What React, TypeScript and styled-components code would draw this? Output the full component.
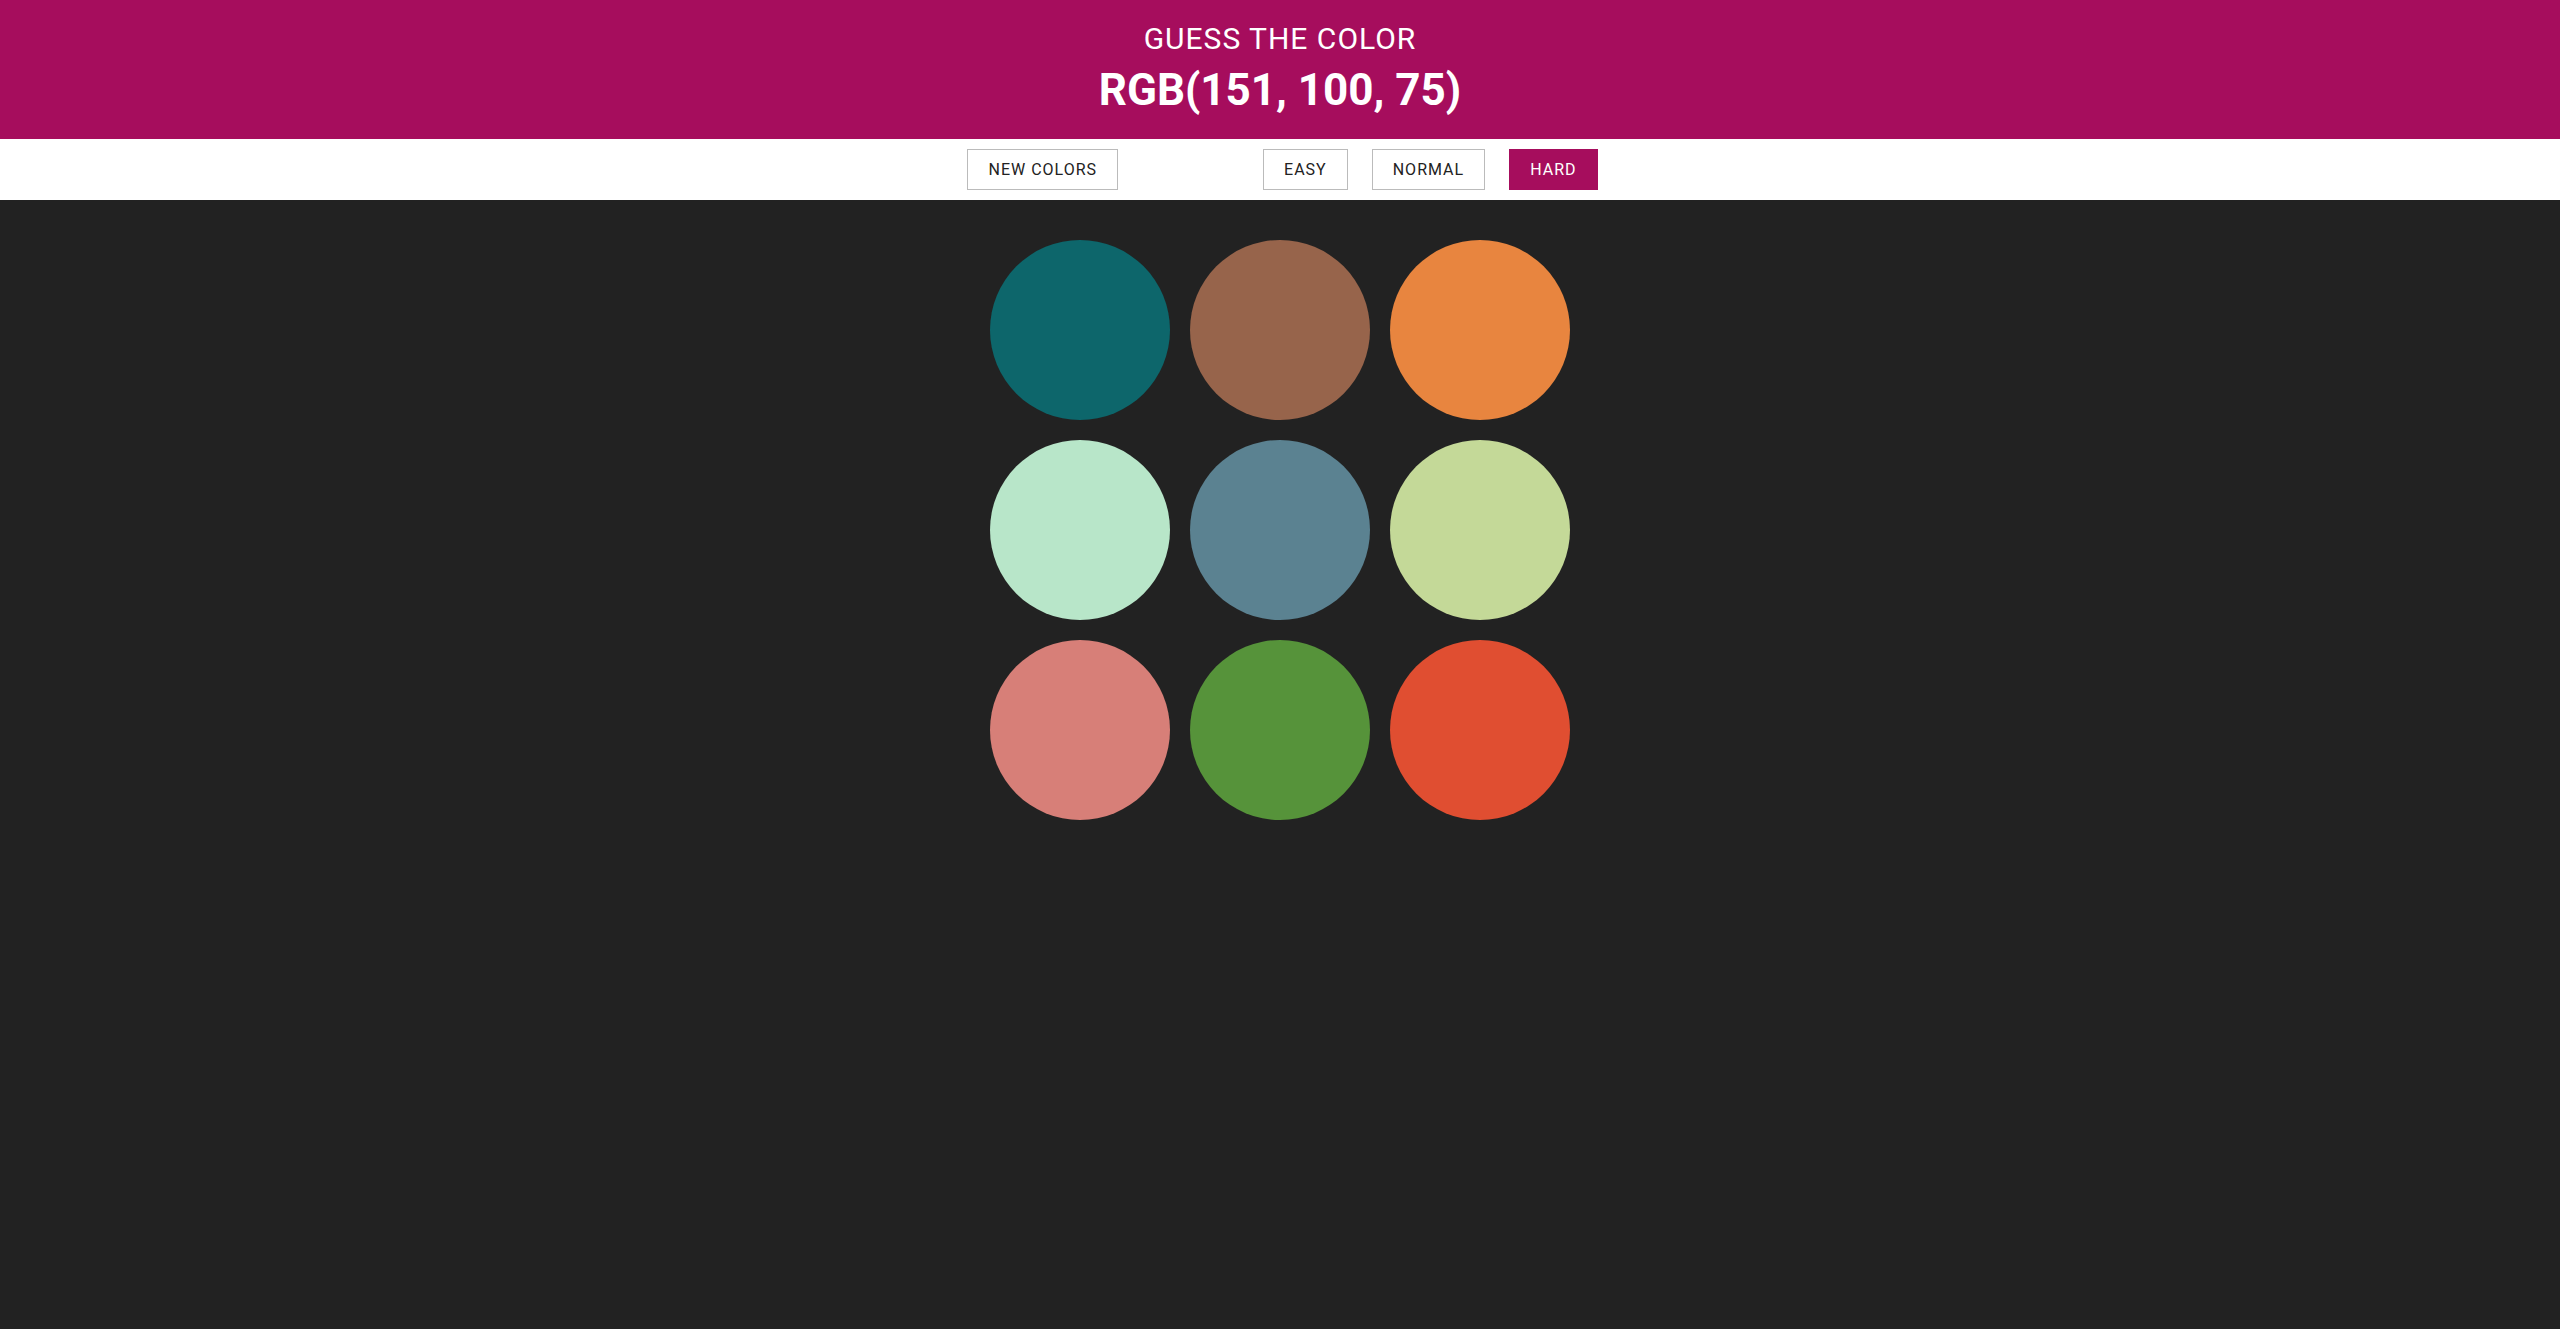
import React, { useState } from "react";
import styled, { createGlobalStyle } from "styled-components";

const GlobalStyle = createGlobalStyle`
  html, body {
    margin: 0;
    padding: 0;
    background: #222222;
    font-family: Roboto, "Liberation Sans", sans-serif;
  }
  * { box-sizing: border-box; }
`;

const ACCENT = "#a60d5d";

const Header = styled.header`
  background: ${ACCENT};
  color: #ffffff;
  height: 139px;
  display: flex;
  flex-direction: column;
  align-items: center;
  padding-top: 21px;
  text-align: center;
`;

const Title = styled.h1`
  margin: 0;
  font-weight: 400;
  font-size: 30px;
  line-height: 36px;
  letter-spacing: 1px;
  text-transform: uppercase;
`;

const Target = styled.h2`
  margin: 6px 0 0;
  font-weight: 700;
  font-size: 44px;
  line-height: 54px;
  text-transform: uppercase;
`;

const Stripe = styled.nav`
  background: #ffffff;
  height: 61px;
  display: flex;
  align-items: center;
  justify-content: center;
  padding-left: 5px;
`;

const Spacer = styled.span`
  display: inline-block;
  width: 145px;
`;

const ModeGroup = styled.div`
  display: flex;
  gap: 24px;
`;

const Button = styled.button<{ $selected?: boolean }>`
  height: 41px;
  padding: 0 20px;
  border: 1px solid ${(p) => (p.$selected ? ACCENT : "#bbbbbb")};
  background: ${(p) => (p.$selected ? ACCENT : "#ffffff")};
  color: ${(p) => (p.$selected ? "#ffffff" : "#222222")};
  font-family: Roboto, "Liberation Sans", sans-serif;
  font-size: 16px;
  font-weight: 400;
  letter-spacing: 1px;
  text-transform: uppercase;
  cursor: pointer;
`;

const Board = styled.main`
  display: grid;
  grid-template-columns: repeat(3, 180px);
  gap: 20px;
  justify-content: center;
  padding-top: 40px;
`;

const Swatch = styled.div`
  width: 180px;
  height: 180px;
  border-radius: 50%;
`;

const colors = [
  "rgb(13, 102, 107)",
  "rgb(151, 100, 75)",
  "rgb(232, 133, 63)",
  "rgb(184, 230, 201)",
  "rgb(91, 130, 145)",
  "rgb(196, 217, 152)",
  "rgb(215, 127, 120)",
  "rgb(86, 147, 58)",
  "rgb(224, 78, 49)",
];

export default function App() {
  const [mode, setMode] = useState("hard");
  return (
    <>
      <GlobalStyle />
      <Header>
        <Title>Guess the color</Title>
        <Target>RGB(151, 100, 75)</Target>
      </Header>
      <Stripe>
        <Button>New Colors</Button>
        <Spacer />
        <ModeGroup>
          {["easy", "normal", "hard"].map((m) => (
            <Button key={m} $selected={mode === m} onClick={() => setMode(m)}>
              {m}
            </Button>
          ))}
        </ModeGroup>
      </Stripe>
      <Board>
        {colors.map((c, i) => (
          <Swatch key={i} style={{ background: c }} />
        ))}
      </Board>
    </>
  );
}
